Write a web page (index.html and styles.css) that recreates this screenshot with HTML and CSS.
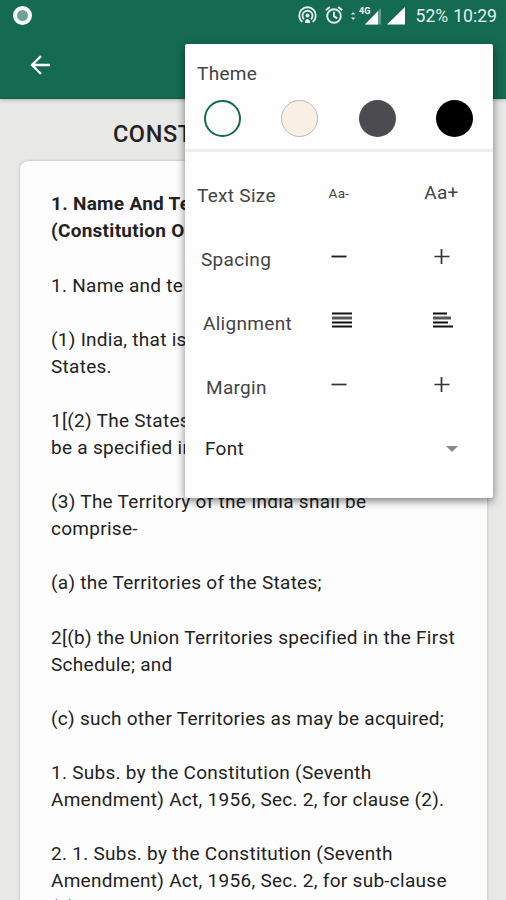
FILE: index.html
```html
<!DOCTYPE html>
<html lang="en">
<head>
    <meta charset="UTF-8">
    <meta name="viewport" content="width=device-width, initial-scale=1.0">
    <title>Constitution of India</title>
    <link rel="stylesheet" href="styles.css">
</head>
<body>
    <header class="app-header">
        <div class="status-bar">
            <span class="record-dot"></span>
            <div class="status-icons">
                <svg class="hotspot" width="19" height="18" viewBox="0 0 19 18" fill="none" stroke="#e4f0eb" stroke-width="1.8">
                    <path d="M4.3 16a8.3 8.3 0 1 1 10.4 0"/>
                    <path d="M6 13.3a5 5 0 1 1 7 0"/>
                    <circle cx="9.5" cy="9.6" r="2" fill="#e4f0eb" stroke="none"/>
                    <path d="M6.8 17c0-5.5 5.4-5.5 5.4 0z" fill="#e4f0eb" stroke="none"/>
                </svg>
                <svg class="alarm" width="18" height="18" viewBox="0 0 18 18" fill="none" stroke="#e4f0eb" stroke-width="1.9">
                    <circle cx="9" cy="10" r="6.8"/>
                    <path d="M9 5.8v4.6l3.2 2M.8 4.2L4.8.9M17.2 4.2L13.2.9"/>
                </svg>
                <svg class="signal-4g" width="31" height="20" viewBox="0 0 31 20">
                    <path d="M0 8.600L2.200 6l2.200 2.600zM0 11.400L2.200 14l2.200-2.600z" fill="#e4f0eb"/>
                    <path d="M30 2v16.500H14z" fill="#5f9d86"/>
                    <path d="M27 5v13.500H14z" fill="#fff"/>
                    <text x="8" y="8" class="network">4G</text>
                </svg>
                <svg class="signal" width="18" height="18" viewBox="0 0 18 18">
                    <path d="M18 0v17.5H0z" fill="#fff"/>
                </svg>
                <span class="battery">52%</span>
                <span class="clock">10:29</span>
            </div>
        </div>
        <div class="toolbar">
            <svg width="20" height="20" viewBox="0 0 20 20" fill="none" stroke="#fff" stroke-width="2.3">
                <path d="M20 10H2M11 1L2 10l9 9"/>
            </svg>
        </div>
    </header>

    <main class="reader">
        <h1 class="title">CONSTITUTION OF INDIA</h1>
        <article class="page">
            <h2>1. Name And Te<br>(Constitution O</h2>
            <p>1. Name and te</p>
            <p>(1) India, that is<br>States.</p>
            <p>1[(2) The States<br>be a specified in</p>
            <p>(3) The Territory of the India shall be<br>comprise-</p>
            <p>(a) the Territories of the States;</p>
            <p>2[(b) the Union Territories specified in the First<br>Schedule; and</p>
            <p>(c) such other Territories as may be acquired;</p>
            <p>1. Subs. by the Constitution (Seventh<br>Amendment) Act, 1956, Sec. 2, for clause (2).</p>
            <p>2. 1. Subs. by the Constitution (Seventh<br>Amendment) Act, 1956, Sec. 2, for sub-clause<br>(b).</p>
        </article>
    </main>

    <section class="settings">
        <div class="theme">
            <h3>Theme</h3>
            <div class="swatches">
                <span class="swatch white"></span>
                <span class="swatch sepia"></span>
                <span class="swatch grey"></span>
                <span class="swatch black"></span>
            </div>
        </div>
        <div class="row text-size">
            <span class="label">Text Size</span>
            <span class="control smaller">Aa-</span>
            <span class="control larger">Aa+</span>
        </div>
        <div class="row spacing">
            <span class="label">Spacing</span>
            <span class="control"><svg width="16" height="16" viewBox="0 0 16 16" stroke="#222" stroke-width="1.9"><path d="M.5 7.5h15"/></svg></span>
            <span class="control"><svg width="16" height="16" viewBox="0 0 16 16" stroke="#333" stroke-width="1.7"><path d="M.5 7.5h15M7.5 0v15"/></svg></span>
        </div>
        <div class="row alignment">
            <span class="label">Alignment</span>
            <span class="control"><svg width="20" height="16" viewBox="0 0 20 16" stroke="#111" stroke-width="2"><path d="M0 1.5h20M0 10.5h20M0 14.5h20"/><path d="M0 6h20" stroke="#555" stroke-width="3"/></svg></span>
            <span class="control"><svg width="20" height="16" viewBox="0 0 20 16" stroke="#111" stroke-width="2"><path d="M0 1.5h14M0 10.5h15M0 14.5h20"/><path d="M0 6h18" stroke="#555" stroke-width="3"/></svg></span>
        </div>
        <div class="row margins">
            <span class="label">Margin</span>
            <span class="control"><svg width="16" height="16" viewBox="0 0 16 16" stroke="#333" stroke-width="1.7"><path d="M.5 7.5h15"/></svg></span>
            <span class="control"><svg width="16" height="16" viewBox="0 0 16 16" stroke="#333" stroke-width="1.7"><path d="M.5 7.5h15M7.5 0v15"/></svg></span>
        </div>
        <div class="font-select">
            <span>Font</span>
            <svg width="12" height="6" viewBox="0 0 12 6"><path d="M0 0h12L6 6z" fill="#8a8a8a"/></svg>
        </div>
    </section>
</body>
</html>
```

FILE: styles.css
```css
* {
    box-sizing: border-box;
}
body {
    margin: 0;
    height: 900px;
    overflow: hidden;
    position: relative;
    background: #e8e8e6;
    color: #222;
    font-family: Roboto, sans-serif;
}
.app-header {
    height: 99px;
    background: #156b52;
    border-bottom: 1px solid #14614a;
    box-shadow: 0 1px 4px rgba(0,0,0,0.25);
}
.status-bar {
    display: flex;
    justify-content: space-between;
    height: 32px;
    padding: 6px 9px 0 13px;
}
.record-dot {
    width: 19px;
    height: 19px;
    border: 4px solid #fff;
    border-radius: 50%;
    background: #6ca491;
}
.status-icons {
    display: flex;
    align-items: flex-start;
    color: #e4f0eb;
    font-size: 17.6px;
    line-height: 21px;
}
.alarm {
    margin-left: 8px;
}
.signal-4g {
    margin-left: 8px;
}
.signal {
    margin: 1px 0 0 5px;
}
.network {
    font-size: 9px;
    font-weight: bold;
    fill: #fff;
}
.battery {
    margin-left: 11px;
}
.clock {
    margin-left: 5px;
}
.toolbar {
    padding: 23px 0 0 30px;
}
.toolbar svg {
    display: block;
}
.reader {
    padding: 20px 19px 0 20px;
}
.title {
    margin: 0;
    height: 42px;
    font-size: 23.5px;
    font-weight: 500;
    line-height: 30px;
    letter-spacing: 0.6px;
    text-align: center;
    white-space: nowrap;
}
.page {
    height: 780px;
    padding: 29.4px 0 0 31px;
    background: #fdfdfd;
    border-radius: 8px;
    box-shadow: 0 0 3px rgba(0,0,0,0.25);
    font-size: 19px;
    line-height: 27.08px;
    letter-spacing: 0.28px;
    white-space: nowrap;
}
.page h2 {
    margin: 0 0 27.08px;
    font-size: 19px;
    font-weight: 700;
}
.page p {
    margin: 0 0 27.08px;
}

/* Display settings popup */
.settings {
    position: absolute;
    top: 44px;
    left: 185px;
    width: 308px;
    height: 454px;
    background: #fefefe;
    border-radius: 2px;
    box-shadow: 0 3px 9px rgba(0,0,0,0.5);
    color: #444;
    font-size: 19px;
    letter-spacing: 0.3px;
}
.theme {
    height: 108px;
    padding: 18px 20px 0 12px;
    border-bottom: 3px solid #eee;
}
.theme h3 {
    margin: 0;
    font-size: 19px;
    font-weight: 400;
    line-height: 24px;
}
.swatches {
    display: flex;
    justify-content: space-between;
    padding: 14px 0 0 7px;
}
.swatch {
    width: 37px;
    height: 37px;
    border-radius: 50%;
}
.white {
    border: 2px solid #156b52;
}
.sepia {
    background: #f9efe3;
    border: 1px solid #bdb8b2;
}
.grey {
    background: #4c4b50;
}
.black {
    background: #000;
}
.row {
    display: grid;
    grid-template-columns: 103px 102px 103px;
    align-items: center;
    height: 64px;
}
.text-size {
    height: 73px;
    padding-top: 8px;
}
.label {
    padding: 5px 0 0 12px;
}
.spacing .label {
    padding-left: 16px;
}
.alignment .label {
    padding-left: 18px;
}
.margins .label {
    padding-left: 21px;
}
.control {
    display: flex;
    justify-content: center;
}
.alignment .control {
    padding: 0 0 2px 5px;
}
.alignment .control:last-child {
    padding-left: 3px;
}
.smaller {
    font-size: 13.5px;
}
.font-select {
    display: flex;
    justify-content: space-between;
    align-items: center;
    padding: 20px 35px 0 20px;
    color: #222;
}
```
